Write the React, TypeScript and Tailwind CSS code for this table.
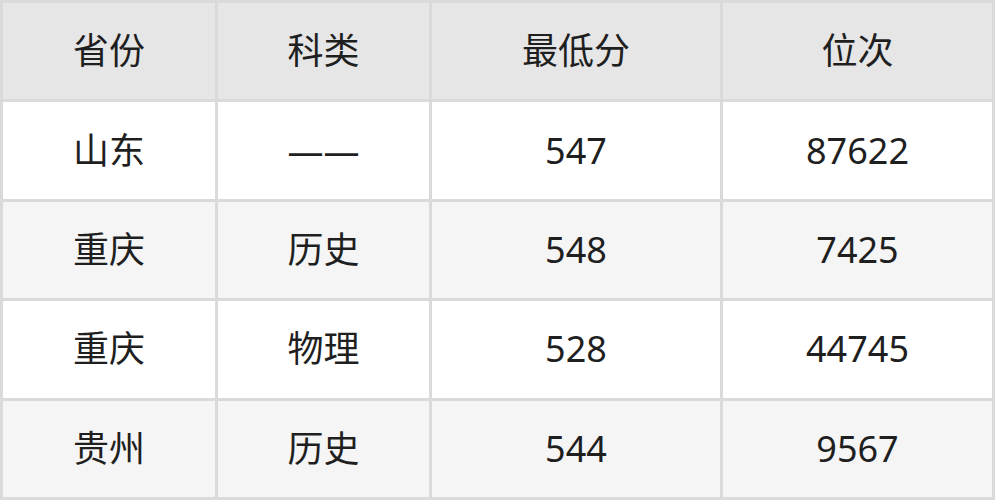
const header = ['省份', '科类', '最低分', '位次'];

const rows = [
  ['山东', '——', '547', '87622'],
  ['重庆', '历史', '548', '7425'],
  ['重庆', '物理', '528', '44745'],
  ['贵州', '历史', '544', '9567'],
];

export default function App() {
  return (
    <div className="h-[500px] w-[995px] bg-white">
      <div
        className="grid h-full w-full grid-cols-[212px_211px_288px_1fr] grid-rows-5 gap-[3px] border-[3px] border-[#dadada] bg-[#dadada] text-[36px] text-[#1f1f1f]"
        style={{ fontFamily: '"Noto Sans", "Noto Sans CJK SC", sans-serif' }}
      >
        {header.map((h) => (
          <div key={h} className="flex items-center justify-center bg-[#e6e6e6]">
            {h}
          </div>
        ))}
        {rows.map((row, i) =>
          row.map((cell, j) => (
            <div
              key={`${i}-${j}`}
              className={`flex items-center justify-center ${i % 2 === 1 ? 'bg-[#f5f5f5]' : 'bg-white'}`}
            >
              {cell}
            </div>
          )),
        )}
      </div>
    </div>
  );
}
